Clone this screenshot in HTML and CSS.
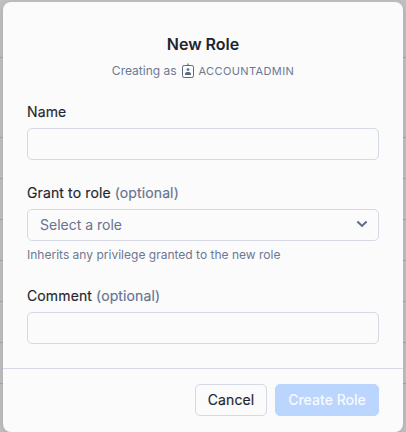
FILE: index.html
```html
<!DOCTYPE html>
<html lang="en">
<head>
<meta charset="utf-8">
<title>New Role</title>
<link rel="stylesheet" href="styles.css">
</head>
<body>
<div class="backdrop" aria-hidden="true">
  <div class="row row-first"></div>
  <div class="row row-head"></div>
  <div class="row"></div>
  <div class="row"></div>
  <div class="row"></div>
  <div class="row"></div>
  <div class="row"></div>
  <div class="row"></div>
</div>
<form class="modal">
  <header class="header">
    <h1 class="title">New Role</h1>
    <div class="subtitle">
      <span>Creating as</span>
      <svg class="badge-icon" width="12" height="15" viewBox="0 0 12 15" fill="none">
        <rect x="0.5" y="2.5" width="11" height="12" rx="1.7" stroke="currentColor"/>
        <path d="M6 0.5V3" stroke="currentColor" stroke-width="1.2"/>
        <circle cx="6" cy="6.6" r="1.4" fill="currentColor"/>
        <path d="M3 12V10.8C3 9.600 4.300 9 6 9s3 .6 3 1.800V12z" fill="currentColor"/>
      </svg>
      <span class="role">ACCOUNTADMIN</span>
    </div>
  </header>
  <div class="fields">
    <div class="field">
      <label class="label" for="name">Name</label>
      <input class="input" id="name" type="text">
    </div>
    <div class="field">
      <div class="label">Grant to role <span class="optional">(optional)</span></div>
      <div class="input select">
        <span>Select a role</span>
        <svg width="12" height="8" viewBox="0 0 12 8" fill="none"><path d="M1.400 1.500L6 5.900L10.600 1.500" stroke="currentColor" stroke-width="2"/></svg>
      </div>
      <div class="hint">Inherits any privilege granted to the new role</div>
    </div>
    <div class="field">
      <label class="label" for="comment">Comment <span class="optional">(optional)</span></label>
      <input class="input" id="comment" type="text">
    </div>
  </div>
  <footer class="footer">
    <button class="button cancel" type="button">Cancel</button>
    <button class="button create" type="button" disabled>Create Role</button>
  </footer>
</form>
</body>
</html>
```
FILE: styles.css
```css
* { box-sizing: border-box; }

body {
  margin: 0;
  height: 432px;
  padding: 2px 3px 0;
  overflow: hidden;
  background: #c1c1c1;
  font-family: Inter, "Liberation Sans", sans-serif;
  font-size: 14px;
  line-height: 20px;
  color: #1e252f;
}

.backdrop {
  position: absolute;
  inset: 0;
}

.row {
  height: 41px;
  border-bottom: 1px solid #a6a9ac;
}

.row-first { height: 58px; }
.row-head { height: 80px; }

.modal {
  position: relative;
  height: 430px;
  border-radius: 8px;
  background: #fbfbfb;
  box-shadow: 0 2px 8px rgba(0, 0, 0, 0.12);
}

.header {
  padding-top: 32px;
  text-align: center;
}

.title {
  margin: 0;
  font-size: 16px;
  font-weight: 600;
  line-height: 20px;
}

.subtitle {
  display: flex;
  justify-content: center;
  align-items: center;
  height: 16px;
  margin-top: 9px;
  font-size: 12px;
  line-height: 16px;
  color: #6c7893;
}

.badge-icon {
  margin: -1px 5px 0;
  color: #5d6a85;
}

.role {
  font-size: 11px;
  letter-spacing: 0.38px;
}

.fields {
  display: flex;
  flex-direction: column;
  gap: 23px;
  padding: 23px 24px 24px;
}

.field {
  display: flex;
  flex-direction: column;
}

.label {
  margin-bottom: 6px;
  font-weight: 400;
  letter-spacing: 0.12px;
  -webkit-text-stroke: 0.15px currentColor;
}

.optional { color: #66728f; }

.input {
  width: 100%;
  height: 32px;
  padding: 0 12px;
  border: 1px solid #d5d9e6;
  border-radius: 5px;
  outline: 0;
  background: transparent;
  font: inherit;
}

.select {
  display: flex;
  align-items: center;
  justify-content: space-between;
  padding-right: 10px;
  color: #66728f;
}

.select svg { margin-top: -2px; color: #5d6a8a; }

.hint {
  margin-top: 6px;
  font-size: 12px;
  line-height: 16px;
  letter-spacing: 0.01px;
  color: #6c7893;
}

.footer {
  display: flex;
  justify-content: flex-end;
  gap: 8px;
  padding: 15px 24px 16px;
  border-top: 1px solid #d5d9e6;
}

.button {
  height: 32px;
  padding: 0;
  border: 1px solid #d5d9e6;
  border-radius: 5px;
  font: 400 14px/20px Inter, "Liberation Sans", sans-serif;
  letter-spacing: 0.1px;
}

.cancel {
  width: 72px;
  background: #fbfbfb;
  color: #1e252f;
  -webkit-text-stroke: 0.15px currentColor;
}

.create {
  width: 104px;
  border-color: #bad6ff;
  background: #bad6ff;
  color: #f8fafe;
  font-weight: 500;
  letter-spacing: 0.03px;
}
```
